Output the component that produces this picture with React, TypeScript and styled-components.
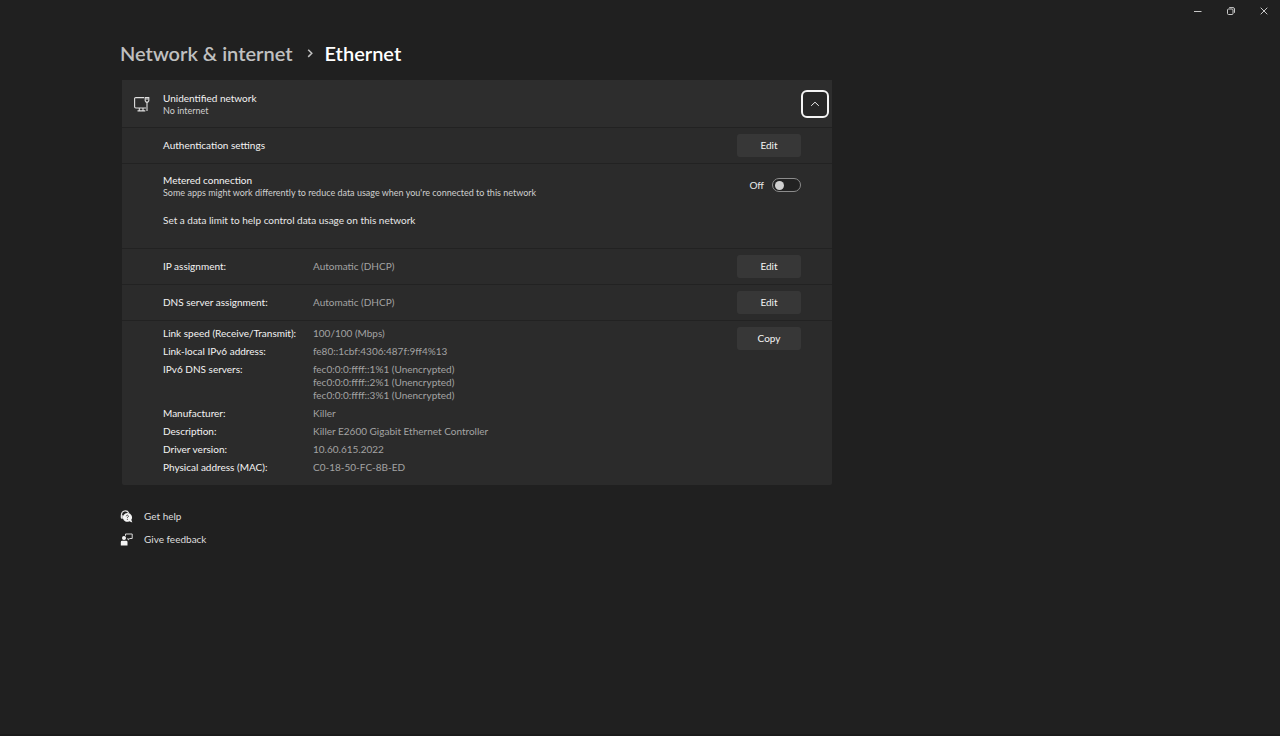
import React, { useState } from "react";
import styled, { createGlobalStyle } from "styled-components";

const GlobalStyle = createGlobalStyle`
  *, *::before, *::after { box-sizing: border-box; }
  body {
    margin: 0;
    background: #202020;
    color: #e8e8e8;
    font-family: Lato, "Segoe UI", sans-serif;
    font-size: 10px;
    line-height: 13px;
  }
  button { font: inherit; color: inherit; }
  a { color: inherit; text-decoration: none; }
`;

const Window = styled.div`
  display: flex;
  flex-direction: column;
  min-height: 100vh;
  border-bottom: 2px solid #1b1b1b;
`;

const TitleBar = styled.header`
  display: flex;
  justify-content: flex-end;
`;

const CaptionButton = styled.button`
  display: grid;
  place-items: center;
  width: 33px;
  height: 22px;
  padding: 0;
  border: 0;
  background: transparent;
  color: #c8c8c8;
`;

const Page = styled.main`
  max-width: 832px;
  padding: 15px 0 0 120px;
`;

const Breadcrumb = styled.nav`
  display: flex;
  align-items: center;
  gap: 12px;
  font-size: 20px;
  line-height: 32px;
  font-weight: 600;
  color: #c0c0c0;
`;

const Current = styled.h1`
  margin: 0;
  font: inherit;
  color: #ffffff;
`;

const Card = styled.section`
  margin: 11px 0 0 2px;
  background: #2b2b2b;
  border-radius: 2px;
`;

const Row = styled.div<{ $head?: boolean }>`
  display: flex;
  align-items: center;
  padding: ${(p) => (p.$head ? "10px 3px 9px 12px" : "6px 31px 6px 41px")};
  background: ${(p) => (p.$head ? "#2d2d2d" : "transparent")};
  border-bottom: 1px solid #222222;
`;

const Metered = styled.div`
  padding: 10px 31px 21px 41px;
  border-bottom: 1px solid #222222;
`;

const MeteredTop = styled.div`
  display: flex;
  align-items: flex-start;
  justify-content: space-between;
  margin-bottom: 15px;
`;

const NetworkIcon = styled.svg`
  width: 16px;
  height: 16px;
  margin-right: 13px;
`;

const Label = styled.div`
  color: #f4f4f4;
`;

const Hint = styled.div`
  font-size: 9px;
  line-height: 12px;
  color: #cfcfcf;
`;

const RowLabel = styled(Label)`
  width: 150px;
`;

const Value = styled.span`
  color: #a3a3a3;
`;

const Action = styled.button`
  width: 64px;
  height: 23px;
  margin-left: auto;
  padding: 0;
  border: 0;
  border-radius: 3px;
  background: #373737;
  color: #f4f4f4;
`;

const Expander = styled.button`
  display: grid;
  place-items: center;
  width: 28px;
  height: 28px;
  margin-left: auto;
  padding: 0;
  border: 2px solid #f4f4f4;
  border-radius: 6px;
  background: #272727;
`;

const Toggle = styled.label`
  display: flex;
  align-items: center;
  gap: 8px;
  height: 22px;
`;

const Switch = styled.input`
  appearance: none;
  display: flex;
  align-items: center;
  width: 29px;
  height: 14px;
  margin: 0;
  padding: 0 2px;
  border: 1px solid #8c8c8c;
  border-radius: 7px;
  background: #222222;

  &::before {
    content: "";
    width: 9px;
    height: 9px;
    border-radius: 50%;
    background: #cfcfcf;
  }

  &:checked { justify-content: flex-end; }
`;

const Details = styled.div`
  display: flex;
  align-items: flex-start;
  padding: 6px 31px 11px 41px;
`;

const Properties = styled.dl`
  display: grid;
  grid-template-columns: 150px auto;
  row-gap: 5px;
  margin: 0;

  dt { color: #f4f4f4; }
  dd { margin: 0; color: #a3a3a3; }
`;

const Line = styled.div``;

const Links = styled.footer`
  display: flex;
  flex-direction: column;
  align-items: flex-start;
  gap: 9px;
  padding-top: 24px;
`;

const HelpLink = styled.a`
  display: flex;
  align-items: center;
  gap: 11px;
  height: 14px;
  color: #dedede;
`;

const properties: [string, string[]][] = [
  ["Link speed (Receive/Transmit):", ["100/100 (Mbps)"]],
  ["Link-local IPv6 address:", ["fe80::1cbf:4306:487f:9ff4%13"]],
  [
    "IPv6 DNS servers:",
    [
      "fec0:0:0:ffff::1%1 (Unencrypted)",
      "fec0:0:0:ffff::2%1 (Unencrypted)",
      "fec0:0:0:ffff::3%1 (Unencrypted)",
    ],
  ],
  ["Manufacturer:", ["Killer"]],
  ["Description:", ["Killer E2600 Gigabit Ethernet Controller"]],
  ["Driver version:", ["10.60.615.2022"]],
  ["Physical address (MAC):", ["C0-18-50-FC-8B-ED"]],
];

export default function App() {
  const [metered, setMetered] = useState(false);

  return (
    <Window>
      <GlobalStyle />
      <TitleBar>
        <CaptionButton aria-label="Minimize">
          <svg width="8" height="8" viewBox="0 0 8 8" stroke="currentColor">
            <path d="M0 4.500h7.500" />
          </svg>
        </CaptionButton>
        <CaptionButton aria-label="Restore">
          <svg width="8" height="8" viewBox="0 0 8 8" fill="none" stroke="currentColor">
            <rect x=".5" y="2" width="5.500" height="5.500" rx="1" />
            <path d="M2.200.6H6A1.500 1.500 0 0 1 7.500 2v3.800" />
          </svg>
        </CaptionButton>
        <CaptionButton aria-label="Close">
          <svg width="8" height="8" viewBox="0 0 8 8" stroke="currentColor">
            <path d="M.7.7l6.600 6.600M7.300.7L.7 7.300" />
          </svg>
        </CaptionButton>
      </TitleBar>

      <Page>
        <Breadcrumb aria-label="Breadcrumb">
          <a href="#network">Network &amp; internet</a>
          <svg width="8" height="10" viewBox="0 0 8 10" fill="none" stroke="currentColor" strokeWidth="1.500">
            <path d="M3.200 1.700L6.800 5.300 3.200 8.900" />
          </svg>
          <Current>Ethernet</Current>
        </Breadcrumb>

        <Card>
          <Row $head>
            <NetworkIcon viewBox="0 0 16 16" fill="none" stroke="#e0e0e0" strokeWidth="1.100">
              <path d="M10 1.600H1.800A1.200 1.200 0 0 0 .6 2.800v8A1.200 1.200 0 0 0 1.800 12H12M5.300 12v2.800M9 12v2.800M3.500 14.900h7.800" />
              <path d="M11.200 1.600h3.600v3.200l-1 1.300h-1.600l-1-1.300z" />
              <path d="M11.800 3h2.400M13 6v8.900" />
            </NetworkIcon>
            <div>
              <Label>Unidentified network</Label>
              <Hint>No internet</Hint>
            </div>
            <Expander aria-label="Collapse" aria-expanded="true">
              <svg width="10" height="6" viewBox="0 0 10 6" fill="none" stroke="#e8e8e8">
                <path d="M1.200 4.800L5 1.200l3.800 3.600" />
              </svg>
            </Expander>
          </Row>

          <Row>
            <RowLabel>Authentication settings</RowLabel>
            <Action>Edit</Action>
          </Row>

          <Metered>
            <MeteredTop>
              <div>
                <Label>Metered connection</Label>
                <Hint>Some apps might work differently to reduce data usage when you're connected to this network</Hint>
              </div>
              <Toggle>
                {metered ? "On" : "Off"}
                <Switch
                  type="checkbox"
                  role="switch"
                  aria-label="Metered connection"
                  checked={metered}
                  onChange={(e) => setMetered(e.target.checked)}
                />
              </Toggle>
            </MeteredTop>
            <a href="#data-limit">Set a data limit to help control data usage on this network</a>
          </Metered>

          <Row>
            <RowLabel>IP assignment:</RowLabel>
            <Value>Automatic (DHCP)</Value>
            <Action>Edit</Action>
          </Row>
          <Row>
            <RowLabel>DNS server assignment:</RowLabel>
            <Value>Automatic (DHCP)</Value>
            <Action>Edit</Action>
          </Row>

          <Details>
            <Properties>
              {properties.map(([name, lines]) => (
                <React.Fragment key={name}>
                  <dt>{name}</dt>
                  <dd>
                    {lines.map((line) => (
                      <Line key={line}>{line}</Line>
                    ))}
                  </dd>
                </React.Fragment>
              ))}
            </Properties>
            <Action>Copy</Action>
          </Details>
        </Card>

        <Links>
          <HelpLink href="#help">
            <svg width="13" height="13" viewBox="0 0 13 13">
              <path d="M1.500 7.500V4.600a3.800 3.800 0 0 1 7.200-1.600" fill="none" stroke="#e0e0e0" strokeWidth="1.200" />
              <path d="M.8 5.300h2v3.500H1.800a1 1 0 0 1-1-1z" fill="#e0e0e0" />
              <path d="M7.300 3a4.400 4.400 0 1 0 2 8.300l3 1.300-1-2.800A4.400 4.400 0 0 0 7.300 3z" fill="#f4f4f4" />
              <path d="M6.200 6.300a1.100 1.100 0 1 1 1.700.9c-.4.200-.6.400-.6.900" fill="none" stroke="#202020" strokeWidth=".8" />
              <circle cx="7.300" cy="9.300" r=".5" fill="#202020" />
            </svg>
            Get help
          </HelpLink>
          <HelpLink href="#feedback">
            <svg width="13" height="13" viewBox="0 0 13 13">
              <path d="M5.500 2.800V1h6.700v4.500H9.800L8.200 7V5.500h-.7" fill="none" stroke="#d8d8d8" />
              <circle cx="4" cy="5" r="2" fill="#f4f4f4" />
              <path d="M.8 9a1.300 1.300 0 0 1 1.300-1.300h4.100A1.300 1.300 0 0 1 7.500 9v3.600H.8z" fill="#f4f4f4" />
            </svg>
            Give feedback
          </HelpLink>
        </Links>
      </Page>
    </Window>
  );
}
